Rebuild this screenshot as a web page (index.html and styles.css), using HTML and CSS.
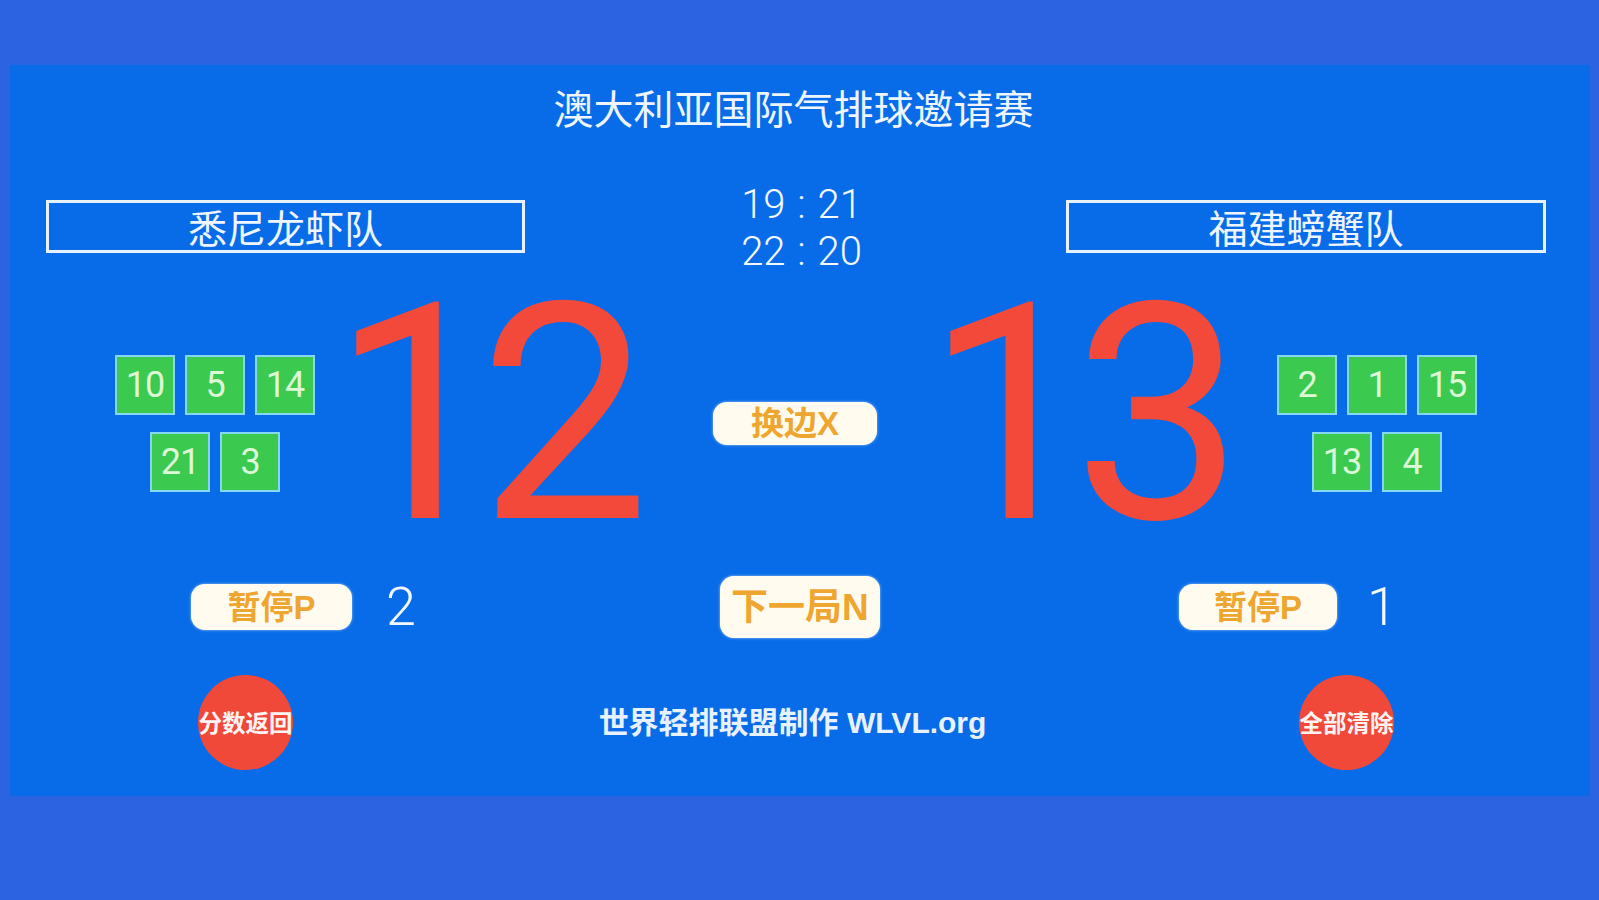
FILE: index.html
```html
<!DOCTYPE html>
<html lang="zh">
<head>
<meta charset="utf-8">
<title>澳大利亚国际气排球邀请赛</title>
<link rel="stylesheet" href="styles.css">
</head>
<body>
<main class="board">
  <h1 class="title">澳大利亚国际气排球邀请赛</h1>

  <section class="teams">
    <div class="team-name team-left">悉尼龙虾队</div>
    <div class="sets">
      <div class="set">19 : 21</div>
      <div class="set">22 : 20</div>
    </div>
    <div class="team-name team-right">福建螃蟹队</div>
  </section>

  <section class="play">
    <div class="players players-left">
      <div class="tile-row">
        <span class="tile">10</span><span class="tile">5</span><span class="tile">14</span>
      </div>
      <div class="tile-row">
        <span class="tile">21</span><span class="tile">3</span>
      </div>
    </div>
    <div class="score score-left">12</div>
    <div class="center">
      <button class="pill pill-swap">换边X</button>
    </div>
    <div class="score score-right">13</div>
    <div class="players players-right">
      <div class="tile-row">
        <span class="tile">2</span><span class="tile">1</span><span class="tile">15</span>
      </div>
      <div class="tile-row">
        <span class="tile">13</span><span class="tile">4</span>
      </div>
    </div>
  </section>

  <section class="controls">
    <button class="pill pill-timeout pill-timeout-left">暂停P</button>
    <span class="timeouts timeouts-left">2</span>
    <button class="pill pill-next">下一局N</button>
    <button class="pill pill-timeout pill-timeout-right">暂停P</button>
    <span class="timeouts timeouts-right">1</span>
  </section>

  <footer class="footer">
    <button class="circle circle-left">分数返回</button>
    <div class="credit">世界轻排联盟制作 WLVL.org</div>
    <button class="circle circle-right">全部清除</button>
  </footer>
</main>
</body>
</html>
```

FILE: styles.css
```css
* {
  box-sizing: border-box;
}

html,
body {
  margin: 0;
  padding: 0;
}

body {
  width: 1599px;
  height: 900px;
  overflow: hidden;
  background: #2c63e0;
  font-family: "Liberation Sans", "Noto Sans CJK SC", sans-serif;
}

.board {
  margin: 65px 0 0 10px;
  width: 1580px;
  height: 731px;
  background: #086ce8;
  color: #f2f7ff;
  display: flex;
  flex-direction: column;
}

/* title */
.title {
  margin: 0;
  height: 84px;
  line-height: 84px;
  padding-right: 13px;
  text-align: center;
  font-family: "Noto Sans CJK SC", sans-serif;
  font-size: 40px;
  font-weight: 400;
  color: #eef5ff;
}

/* teams row */
.teams {
  height: 114px;
  display: flex;
  align-items: flex-start;
  padding-left: 36px;
}

.team-name {
  margin-top: 51px;
  height: 53px;
  border: 3px solid #e6f2ff;
  display: flex;
  align-items: center;
  justify-content: center;
  font-family: "Noto Sans CJK SC", sans-serif;
  font-size: 39px;
  color: #eef5ff;
  line-height: 1;
}

.team-left {
  width: 479px;
}

.team-right {
  width: 480px;
}

.sets {
  width: 541px;
  padding-top: 32px;
  padding-left: 12px;
  text-align: center;
  font-family: Roboto, "Liberation Sans", sans-serif;
  font-weight: 300;
  font-size: 40px;
  line-height: 47px;
  word-spacing: 2px;
  color: #f4f8ff;
}

/* play row */
.play {
  height: 303px;
  display: flex;
  align-items: flex-start;
  padding-left: 105px;
}

.players {
  width: 200px;
  margin-top: 92px;
  display: flex;
  flex-direction: column;
  align-items: center;
  gap: 17px;
}

.tile-row {
  display: flex;
  gap: 10px;
}

.tile {
  width: 60px;
  height: 60px;
  border: 2px solid #86d8f2;
  background: #3bc94f;
  color: #dcf8d6;
  font-family: Roboto, "Liberation Sans", sans-serif;
  font-size: 36px;
  display: flex;
  align-items: center;
  justify-content: center;
  line-height: 1;
  letter-spacing: -1px;
}

.score {
  width: 337px;
  font-family: Roboto, "Liberation Sans", sans-serif;
  font-weight: 400;
  font-size: 303px;
  line-height: 303px;
  height: 303px;
  letter-spacing: -22px;
  color: #f2493a;
  white-space: nowrap;
}

.score-left {
  margin-left: 4px;
  padding-left: 12px;
}

.center {
  width: 261px;
  padding-left: 57px;
  padding-top: 139px;
}

.score-right {
  padding-left: 8px;
}

.players-right {
  margin-left: 23px;
}

/* pills */
.pill {
  border: none;
  padding: 0;
  margin: 0;
  background: #fffcef;
  color: #efa630;
  font-family: "Liberation Sans", "Noto Sans CJK SC", sans-serif;
  font-weight: 700;
  display: flex;
  align-items: center;
  justify-content: center;
  border-radius: 14px;
  box-shadow: 0 0 3px rgba(255, 255, 255, 0.6);
  line-height: 1;
  white-space: nowrap;
}

.pill-swap {
  width: 164px;
  height: 43px;
  font-size: 33px;
}

/* controls row */
.controls {
  height: 82px;
  display: flex;
  align-items: center;
  padding-left: 181px;
}

.pill-timeout {
  height: 46px;
  font-size: 33px;
}

.pill-timeout-left {
  width: 161px;
}

.pill-timeout-right {
  width: 158px;
  margin-left: 299px;
}

.timeouts {
  font-family: Roboto, "Liberation Sans", sans-serif;
  font-weight: 300;
  font-size: 54px;
  line-height: 54px;
  color: #f4f8ff;
}

.timeouts-left {
  margin-left: 34px;
}

.timeouts-right {
  margin-left: 30px;
}

.pill-next {
  width: 160px;
  height: 62px;
  font-size: 37px;
  margin-left: 304px;
}

/* footer row */
.footer {
  flex: 1;
  display: flex;
  align-items: flex-start;
  padding-top: 27px;
  padding-left: 188px;
}

.circle {
  width: 95px;
  height: 95px;
  border: none;
  padding: 0;
  margin: 0;
  border-radius: 50%;
  background: #f0493a;
  color: #fff4f2;
  font-family: "Noto Sans CJK SC", sans-serif;
  font-weight: 700;
  font-size: 23.5px;
  line-height: 1;
  white-space: nowrap;
  display: flex;
  align-items: center;
  justify-content: center;
  overflow: visible;
}

.credit {
  width: 391px;
  margin-left: 304px;
  height: 95px;
  line-height: 95px;
  text-align: center;
  white-space: nowrap;
  font-family: "Liberation Sans", "Noto Sans CJK SC", sans-serif;
  font-weight: 700;
  font-size: 30px;
  color: #e8f2ff;
}

.circle-right {
  margin-left: 311px;
}
```
